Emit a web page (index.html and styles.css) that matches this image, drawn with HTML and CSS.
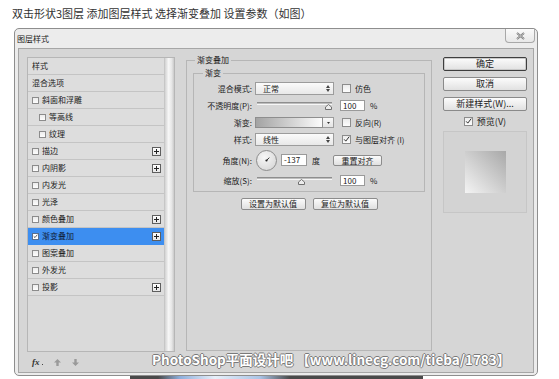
FILE: index.html
```html
<!DOCTYPE html>
<html>
<head>
    <meta charset="UTF-8">
    <title>图层样式 - 渐变叠加</title>
    <link rel="stylesheet" href="styles.css">
</head>
<body>
    <div class="caption">双击形状3图层 添加图层样式 选择渐变叠加 设置参数（如图）</div>

    <div class="dialog">
        <div class="titlebar">
            <span class="title">图层样式</span>
            <span class="close">
                <svg width="9" height="8" viewBox="0 0 9 8">
                    <path d="M1 1 L8 7 M8 1 L1 7" stroke="#707070" stroke-width="1.8" fill="none"/>
                    <path d="M1 1 L8 7 M8 1 L1 7" stroke="#f4f4f4" stroke-width="0.6" fill="none"/>
                </svg>
            </span>
        </div>

        <div class="content">
            <!-- style list -->
            <div class="left">
                <div class="list">
                    <div class="items">
                        <div class="row">样式</div>
                        <div class="row">混合选项</div>
                        <div class="row"><span class="cb"></span>斜面和浮雕</div>
                        <div class="row sub"><span class="cb"></span>等高线</div>
                        <div class="row sub"><span class="cb"></span>纹理</div>
                        <div class="row"><span class="cb"></span>描边<span class="plus"></span></div>
                        <div class="row"><span class="cb"></span>内阴影<span class="plus"></span></div>
                        <div class="row"><span class="cb"></span>内发光</div>
                        <div class="row"><span class="cb"></span>光泽</div>
                        <div class="row"><span class="cb"></span>颜色叠加<span class="plus"></span></div>
                        <div class="row selected">
                            <span class="cb">
                                <svg width="7" height="7" viewBox="0 0 7 7"><path d="M1 3.2 L2.8 5 L6 1" stroke="#222" stroke-width="1" fill="none"/></svg>
                            </span>渐变叠加<span class="plus"></span>
                        </div>
                        <div class="row"><span class="cb"></span>图案叠加</div>
                        <div class="row"><span class="cb"></span>外发光</div>
                        <div class="row"><span class="cb"></span>投影<span class="plus"></span></div>
                    </div>
                    <div class="scrollbar"></div>
                </div>
                <div class="list-footer">
                    <span class="fx">fx</span><span class="fx-dot"></span>
                    <svg class="arrow" width="7" height="7" viewBox="0 0 7 7"><path d="M3.5 0 L7 3.5 L4.7 3.5 L4.7 7 L2.3 7 L2.3 3.5 L0 3.5 Z" fill="#9a9a9a"/></svg>
                    <svg class="arrow" width="7" height="7" viewBox="0 0 7 7"><path d="M3.5 7 L7 3.5 L4.7 3.5 L4.7 0 L2.3 0 L2.3 3.5 L0 3.5 Z" fill="#9a9a9a"/></svg>
                </div>
            </div>

            <!-- gradient overlay settings -->
            <fieldset class="group">
                <legend>渐变叠加</legend>
                <fieldset class="sub-group">
                    <legend>渐变</legend>

                    <div class="field">
                        <label>混合模式:</label>
                        <div class="select">正常
                            <svg width="4" height="7" viewBox="0 0 4 7"><path d="M0 3 L2 0 L4 3 Z M0 4 L2 7 L4 4 Z" fill="#444"/></svg>
                        </div>
                        <span class="cb lg"></span><span>仿色</span>
                    </div>

                    <div class="field">
                        <label>不透明度(P):</label>
                        <div class="slider-wrap">
                            <div class="slider">
                                <svg class="thumb" style="left: 95%" width="7" height="6" viewBox="0 0 7 6"><path d="M3.5 0.5 L6.5 3 L6.5 5.5 L0.5 5.5 L0.5 3 Z" fill="#ececec" stroke="#707070" stroke-width="1"/></svg>
                            </div>
                        </div>
                        <div class="num">100</div><span class="unit">%</span>
                    </div>

                    <div class="field">
                        <label>渐变:</label>
                        <div class="gradient">
                            <div class="ramp"></div>
                            <div class="drop"><svg width="3" height="2" viewBox="0 0 3 2"><path d="M0 0 L3 0 L1.5 2 Z" fill="#333"/></svg></div>
                        </div>
                        <span class="cb lg"></span><span>反向(R)</span>
                    </div>

                    <div class="field">
                        <label>样式:</label>
                        <div class="select">线性
                            <svg width="4" height="7" viewBox="0 0 4 7"><path d="M0 3 L2 0 L4 3 Z M0 4 L2 7 L4 4 Z" fill="#444"/></svg>
                        </div>
                        <span class="cb lg">
                            <svg width="9" height="9" viewBox="0 0 9 9"><path d="M1.5 4.3 L3.6 6.6 L8 0.8" stroke="#222" stroke-width="1.2" fill="none"/></svg>
                        </span><span>与图层对齐 (I)</span>
                    </div>

                    <div class="field angle">
                        <label>角度(N):</label>
                        <svg class="dial" width="21" height="21" viewBox="0 0 21 21">
                            <defs>
                                <radialGradient id="dialFill" cx="40%" cy="35%" r="70%">
                                    <stop offset="0" stop-color="#f7f7f7"/>
                                    <stop offset="1" stop-color="#d8d8d8"/>
                                </radialGradient>
                            </defs>
                            <circle cx="10.5" cy="10.5" r="10" fill="url(#dialFill)" stroke="#8c8c8c"/>
                            <line x1="10.5" y1="10.5" x2="13.3" y2="7.6" stroke="#333" stroke-width="1"/>
                            <circle cx="10.5" cy="10.5" r="1.1" fill="#222"/>
                        </svg>
                        <div class="num wide">-137</div><span class="unit deg">度</span>
                        <button class="btn-sm reset">重置对齐</button>
                    </div>

                    <div class="field">
                        <label>缩放(S):</label>
                        <div class="slider-wrap">
                            <div class="slider">
                                <svg class="thumb" style="left: 59%" width="7" height="6" viewBox="0 0 7 6"><path d="M3.5 0.5 L6.5 3 L6.5 5.5 L0.5 5.5 L0.5 3 Z" fill="#ececec" stroke="#707070" stroke-width="1"/></svg>
                            </div>
                        </div>
                        <div class="num">100</div><span class="unit">%</span>
                    </div>
                </fieldset>

                <div class="defaults">
                    <button class="btn-sm">设置为默认值</button>
                    <button class="btn-sm">复位为默认值</button>
                </div>
            </fieldset>

            <!-- dialog buttons -->
            <div class="right">
                <button class="btn default">确定</button>
                <button class="btn">取消</button>
                <button class="btn">新建样式(W)...</button>
                <div class="preview-check">
                    <span class="cb lg">
                        <svg width="9" height="9" viewBox="0 0 9 9"><path d="M1.5 4.3 L3.6 6.6 L8 0.8" stroke="#222" stroke-width="1.2" fill="none"/></svg>
                    </span>预览(V)
                </div>
                <div class="preview">
                    <div class="swatch"></div>
                </div>
            </div>
        </div>
    </div>

    <div class="taskbar"></div>

    <div class="watermark">PhotoShop平面设计吧 【www.linecg.com/tieba/1783】</div>
</body>
</html>
```

FILE: styles.css
```css
* {
    box-sizing: border-box;
}
html, body {
    margin: 0;
    height: 379px;
    overflow: hidden;
}
body {
    position: relative;
    background: #fff;
    color: #222;
    font-family: "Noto Sans CJK SC", "Noto Sans", sans-serif;
}
button {
    font: inherit;
    color: inherit;
    padding: 0;
}

.caption {
    height: 28px;
    padding: 5px 0 0 12px;
    font-size: 11px;
    line-height: 17px;
    color: #333;
}

/* dialog frame */
.dialog {
    margin-left: 14px;
    width: 524px;
    height: 348px;
    border: 1px solid #8e8e8e;
    border-radius: 5px;
    background: #ececec;
    display: flex;
    flex-direction: column;
}
.titlebar {
    height: 19px;
    flex: none;
    display: flex;
    align-items: flex-start;
    justify-content: space-between;
    padding-left: 2px;
}
.title {
    font-size: 8px;
    line-height: 19px;
}
.close {
    width: 30px;
    height: 14px;
    margin-right: 2px;
    border: 1px solid #a8a8a8;
    border-top: none;
    border-radius: 0 0 4px 4px;
    background: linear-gradient(#fafafa, #e8e8e8);
    display: flex;
    align-items: center;
    justify-content: center;
}
.content {
    flex: 1;
    margin: 0 3px 3px;
    border: 1px solid #a6a6a6;
    background: #d6d6d6;
    display: flex;
    align-items: flex-start;
    padding: 8px 6px 0 8px;
    font-size: 8px;
}

/* checkbox */
.cb {
    flex: none;
    width: 7px;
    height: 7px;
    border: 1px solid #8c8c8c;
    background: linear-gradient(#ececec, #fdfdfd);
    display: flex;
    align-items: center;
    justify-content: center;
}
.cb svg {
    display: block;
}
.cb.lg {
    width: 9px;
    height: 9px;
}

/* left list */
.left {
    width: 148px;
    flex: none;
    display: flex;
    flex-direction: column;
}
.list {
    height: 295px;
    border: 1px solid #b6b6b6;
    background: #dadada;
    display: flex;
}
.items {
    flex: 1;
}
.row {
    height: 17px;
    border-bottom: 1px solid #c4c4c4;
    background: #dddddd;
    display: flex;
    align-items: center;
    padding: 0 3px 0 4px;
    line-height: 16px;
}
.row .cb {
    margin-right: 3px;
}
.row.sub {
    padding-left: 11px;
}
.row.selected {
    background: #3d8ef0;
    border-bottom-color: #3d8ef0;
    color: #10203a;
}
.row.selected .cb {
    background: #fff;
    border-color: #5a6f8c;
}
.plus {
    margin-left: auto;
    width: 9px;
    height: 9px;
    border: 1px solid #5e5e5e;
    background: linear-gradient(#ffffff, #e6e6e6);
    position: relative;
}
.plus::before,
.plus::after {
    content: "";
    position: absolute;
    background: #222;
}
.plus::before {
    left: 1px;
    top: 3px;
    width: 5px;
    height: 1px;
}
.plus::after {
    left: 3px;
    top: 1px;
    width: 1px;
    height: 5px;
}
.scrollbar {
    width: 10px;
    border-left: 1px solid #c6c6c6;
    background: linear-gradient(to right, #d2d2d2, #f7f7f7 40%, #e6e6e6 75%, #c9c9c9);
}
.list-footer {
    height: 20px;
    display: flex;
    align-items: center;
    padding-left: 5px;
}
.fx {
    font-family: "Liberation Serif", serif;
    font-style: italic;
    font-weight: bold;
    font-size: 9px;
    color: #333;
}
.fx-dot {
    width: 1px;
    height: 1px;
    background: #444;
    margin: 5px 0 0 2px;
    align-self: center;
}
.arrow {
    display: block;
    margin-left: 11px;
}

/* middle groups */
fieldset {
    margin: 0;
    min-width: 0;
}
legend {
    font-size: 8px;
    line-height: 10px;
    padding: 0 2px;
}
.group {
    width: 246px;
    height: 296px;
    flex: none;
    margin: -2px 11px 0;
    padding: 0 6px;
    border: 1px solid #b6b6b6;
}
.group > legend {
    margin-left: 2px;
}
.sub-group {
    margin-top: 3px;
    padding: 3px 0;
    border: 1px solid #b6b6b6;
}
.sub-group > legend {
    margin-left: 9px;
}
.field {
    display: flex;
    align-items: center;
    height: 15px;
    margin-top: 2px;
    white-space: nowrap;
}
.sub-group > .field:first-of-type {
    margin-top: 0;
}
.field > label {
    flex: none;
    width: 58px;
    margin-right: 3px;
    text-align: right;
}
.field > .cb {
    margin: 0 4px 0 8px;
}
.select {
    flex: none;
    width: 79px;
    height: 13px;
    border: 1px solid #9c9c9c;
    background: linear-gradient(#fbfbfb, #e8e8e8);
    display: flex;
    align-items: center;
    justify-content: space-between;
    padding: 0 3px 0 7px;
}
.slider-wrap {
    flex: none;
    width: 79px;
    height: 8px;
    padding: 0 2px;
}
.slider {
    position: relative;
    height: 3px;
    border-top: 1px solid #8e8e8e;
    border-bottom: 1px solid #f6f6f6;
    background: #bdbdbd;
}
.thumb {
    position: absolute;
    top: 1px;
    margin-left: -3.5px;
}
.num {
    flex: none;
    width: 25px;
    height: 11px;
    margin-left: 6px;
    border: 1px solid #9a9a9a;
    background: #fff;
    padding-left: 2px;
    line-height: 9px;
}
.num.wide {
    width: 26px;
    height: 12px;
    margin-left: 4px;
    line-height: 10px;
}
.unit {
    margin-left: 5px;
}
.gradient {
    flex: none;
    display: flex;
    width: 79px;
    height: 11px;
}
.ramp {
    flex: 1;
    border: 1px solid #8e8e8e;
    background: linear-gradient(to right, #a3a3a3, #fcfcfc);
}
.drop {
    width: 11px;
    border: 1px solid #9c9c9c;
    border-left: none;
    background: linear-gradient(#f8f8f8, #e4e4e4);
    display: flex;
    align-items: center;
    justify-content: center;
}
.field.angle {
    height: 22px;
}
.dial {
    display: block;
    flex: none;
    margin-left: 1px;
}
.btn-sm {
    height: 12px;
    border: 1px solid #8c8c8c;
    border-radius: 2px;
    background: linear-gradient(#fbfbfb, #e0e0e0);
    font-size: 8px;
    line-height: 10px;
}
.reset {
    width: 49px;
    height: 11px;
    margin-left: 13px;
    line-height: 9px;
}
.defaults {
    display: flex;
    justify-content: center;
    gap: 7px;
    margin-top: 6px;
}
.defaults .btn-sm {
    width: 65px;
}

/* right buttons */
.right {
    width: 84px;
    flex: none;
    display: flex;
    flex-direction: column;
}
.btn {
    height: 14px;
    margin-bottom: 6px;
    border: 1px solid #8a8a8a;
    border-radius: 2px;
    background: linear-gradient(#fcfcfc, #e1e1e1);
    font-size: 9px;
    line-height: 12px;
}
.btn.default {
    border-color: #3e3e3e;
    box-shadow: inset 0 0 0 1px #c9c9c9;
}
.preview-check {
    height: 9px;
    display: flex;
    align-items: center;
    justify-content: center;
    gap: 4px;
    font-size: 9px;
    margin-bottom: 5px;
}
.preview {
    height: 82px;
    border: 1px solid #c6c6c6;
    background: #d3d3d3;
    display: flex;
    align-items: center;
    justify-content: center;
}
.swatch {
    width: 41px;
    height: 42px;
    background: linear-gradient(45deg, #f4f4f4, #a8a8a8);
}

/* window underneath */
.taskbar {
    margin-left: 130px;
    width: 293px;
    height: 3px;
    background: linear-gradient(to right, #4a4a4a 0, #4a4a4a 28px, #8eafdc 50px, #e8f0fa 85px, #aac4e6 130px, #4a4a4a 160px);
}

/* watermark over the screenshot */
.watermark {
    position: absolute;
    left: 152px;
    top: 351px;
    font-size: 13.5px;
    font-weight: bold;
    line-height: 16px;
    color: #fff;
    white-space: nowrap;
    text-shadow: 1px 0 0 #7a7a7a, -1px 0 0 #7a7a7a, 0 1px 0 #7a7a7a, 0 -1px 0 #7a7a7a;
}
```
